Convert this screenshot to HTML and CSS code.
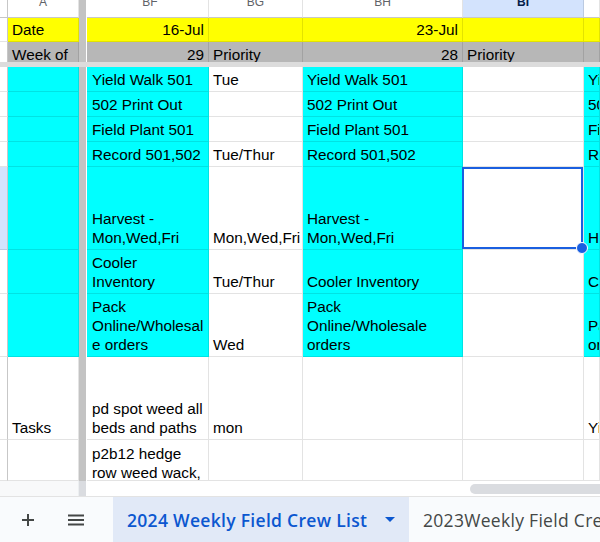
FILE: index.html
```html
<!DOCTYPE html>
<html>
<head>
<meta charset="utf-8">
<link rel="stylesheet" href="styles.css">
</head>
<body>
<div class="sheet">
  <div class="row hdr">
    <div class="c rh"></div>
    <div class="c"><span>A</span></div>
    <div class="fz"></div>
    <div class="c"><span>BF</span></div>
    <div class="c"><span>BG</span></div>
    <div class="c"><span>BH</span></div>
    <div class="c sel-col"><span>BI</span></div>
    <div class="c"></div>
  </div>
  <div class="row date">
    <div class="c rh"></div>
    <div class="c ye">Date</div>
    <div class="fz"></div>
    <div class="c ye r">16-Jul</div>
    <div class="c ye"></div>
    <div class="c ye r">23-Jul</div>
    <div class="c ye"></div>
    <div class="c ye"></div>
  </div>
  <div class="row week">
    <div class="c rh"></div>
    <div class="c gr">Week of</div>
    <div class="fz"></div>
    <div class="c gr r">29</div>
    <div class="c gr">Priority</div>
    <div class="c gr r">28</div>
    <div class="c gr">Priority</div>
    <div class="c gr"></div>
  </div>
  <div class="hfz"></div>
  <div class="row">
    <div class="c rh"></div>
    <div class="c cy"></div>
    <div class="fz"></div>
    <div class="c cy">Yield Walk 501</div>
    <div class="c">Tue</div>
    <div class="c cy">Yield Walk 501</div>
    <div class="c"></div>
    <div class="c cy">Yield Walk 501</div>
  </div>
  <div class="row">
    <div class="c rh"></div>
    <div class="c cy"></div>
    <div class="fz"></div>
    <div class="c cy">502 Print Out</div>
    <div class="c"></div>
    <div class="c cy">502 Print Out</div>
    <div class="c"></div>
    <div class="c cy">502 Print Out</div>
  </div>
  <div class="row">
    <div class="c rh"></div>
    <div class="c cy"></div>
    <div class="fz"></div>
    <div class="c cy">Field Plant 501</div>
    <div class="c"></div>
    <div class="c cy">Field Plant 501</div>
    <div class="c"></div>
    <div class="c cy">Field Plant 501</div>
  </div>
  <div class="row">
    <div class="c rh"></div>
    <div class="c cy"></div>
    <div class="fz"></div>
    <div class="c cy">Record 501,502</div>
    <div class="c">Tue/Thur</div>
    <div class="c cy">Record 501,502</div>
    <div class="c"></div>
    <div class="c cy">Record 501,502</div>
  </div>
  <div class="row harvest">
    <div class="c rh sel-row"></div>
    <div class="c cy"></div>
    <div class="fz"></div>
    <div class="c cy"><span>Harvest -<br>Mon,Wed,Fri</span></div>
    <div class="c">Mon,Wed,Fri</div>
    <div class="c cy"><span>Harvest -<br>Mon,Wed,Fri</span></div>
    <div class="c selected"><div class="selbox"><div class="handle"></div></div></div>
    <div class="c cy">Harvest - Mon,Wed,Fri</div>
  </div>
  <div class="row cooler">
    <div class="c rh"></div>
    <div class="c cy"></div>
    <div class="fz"></div>
    <div class="c cy"><span>Cooler<br>Inventory</span></div>
    <div class="c">Tue/Thur</div>
    <div class="c cy">Cooler Inventory</div>
    <div class="c"></div>
    <div class="c cy">Cooler Inventory</div>
  </div>
  <div class="row pack">
    <div class="c rh"></div>
    <div class="c cy"></div>
    <div class="fz"></div>
    <div class="c cy"><span>Pack<br>Online/Wholesal<br>e orders</span></div>
    <div class="c">Wed</div>
    <div class="c cy"><span>Pack<br>Online/Wholesale<br>orders</span></div>
    <div class="c"></div>
    <div class="c cy"><span>Pack Online/Wholesale<br>orders</span></div>
  </div>
  <div class="row tasks">
    <div class="c rh"></div>
    <div class="c">Tasks</div>
    <div class="fz"></div>
    <div class="c"><span>pd spot weed all<br>beds and paths</span></div>
    <div class="c">mon</div>
    <div class="c"></div>
    <div class="c"></div>
    <div class="c">Yield Walk</div>
  </div>
  <div class="row last">
    <div class="c rh"></div>
    <div class="c"></div>
    <div class="fz"></div>
    <div class="c top"><span>p2b12 hedge<br>row weed wack,<br>spot weed</span></div>
    <div class="c"></div>
    <div class="c"></div>
    <div class="c"></div>
    <div class="c"></div>
  </div>
  <div class="scroll">
    <div class="sc-left"></div>
    <div class="sc-fz"></div>
    <div class="sc-track"><div class="thumb"></div></div>
  </div>
</div>
<div class="tabbar">
  <div class="tbtn plus">
    <svg width="14" height="14" viewBox="0 0 14 14"><path d="M7 1v12M1 7h12" stroke="#444746" stroke-width="2" fill="none"/></svg>
  </div>
  <div class="tbtn menu">
    <svg width="18" height="12" viewBox="0 0 18 12"><path d="M1 1.5h16M1 6h16M1 10.5h16" stroke="#444746" stroke-width="2" fill="none"/></svg>
  </div>
  <div class="tab active">
    <span class="tname">2024 Weekly Field Crew List</span>
    <svg class="caret" width="10" height="5" viewBox="0 0 10 5"><path d="M0 0h10L5 5z" fill="#0b57d0"/></svg>
  </div>
  <div class="tab">
    <span class="tname">2023Weekly Field Crew List</span>
  </div>
</div>
</body>
</html>
```

FILE: styles.css
```css
* { box-sizing: border-box; margin: 0; padding: 0; }
html, body { width: 600px; height: 542px; overflow: hidden; background: #fff; }
body {
  font-family: "Liberation Sans", Arial, sans-serif;
  font-size: 15.3px;
  color: #000;
}
.sheet { display: flex; flex-direction: column; width: 600px; }
.row {
  display: grid;
  grid-template-columns: 8px 71px 8px 122px 94px 160px 121px 16px;
  height: 25px;
  flex: none;
}
.c {
  border-right: 1px solid rgba(0, 0, 0, 0.11);
  border-bottom: 1px solid rgba(0, 0, 0, 0.11);
  overflow: hidden;
  display: flex;
  align-items: flex-end;
  padding: 0 4px 2px;
  white-space: nowrap;
  line-height: 19px;
  min-width: 0;
}
.row > .c:nth-child(4) { padding-left: 5px; }
.c.r { justify-content: flex-end; }
.c.top { align-items: flex-start; padding-top: 4px; }
.rh { padding: 0; border-right-color: #c7c7c7; }
.fz { background: #c3c3c3; border-right: 1px solid #fff; }
.ye { background: #ffff00; }
.gr { background: #b7b7b7; }
.cy { background: #00ffff; }

.hdr { height: 18px; }
.hdr .c {
  justify-content: center;
  align-items: flex-start;
  font-size: 12px;
  line-height: 12px;
  color: #5f6368;
  padding: 0;
  border-bottom-color: #c7c7c7;
}
.hdr .c span { margin-top: -4px; }
.hdr .c.rh { border-right-color: #c7c7c7; }
.hdr .sel-col { background: #d3e3fd; color: #041e49; font-weight: 700; }

.date { height: 24px; }
.week { height: 20px; }
.week .c { border-bottom: none; padding-bottom: 0; line-height: 15px; }
.hfz { height: 5px; background: #dcdcdc; flex: none; }

.harvest { height: 83px; }
.cooler { height: 44px; }
.pack { height: 63px; }
.tasks { height: 83px; }
.last { height: 41px; }

.sel-row { background: #d3e3fd; }
.c.selected { overflow: visible; position: relative; }
.selbox {
  position: absolute;
  left: -1px; top: 0; right: 0; bottom: 0;
  border: 2px solid #1a5fe0;
  z-index: 2;
}
.handle {
  position: absolute;
  right: -7px; bottom: -7px;
  width: 12px; height: 12px;
  border-radius: 50%;
  background: #1a5fe0;
  border: 1px solid #fff;
}

.scroll {
  display: grid;
  grid-template-columns: 79px 7px 1fr;
  height: 15px;
  flex: none;
}
.sc-left { background: #f8f9fa; border-right: 1px solid #eceff1; }
.sc-fz { background: #dadce0; }
.sc-track { display: flex; align-items: center; padding-left: 384px; }
.thumb { flex: 1; height: 10px; background: #dadce0; border-radius: 5px 0 0 5px; }

.tabbar {
  display: flex;
  height: 46px;
  border-top: 1px solid #e3e3e3;
  background: #f9fbfd;
  align-items: stretch;
  font-family: "Open Sans", "Roboto", sans-serif;
  font-size: 17.5px;
  letter-spacing: 0.3px;
  white-space: nowrap;
  overflow: hidden;
}
.tbtn { display: flex; align-items: center; justify-content: center; flex: none; }
.plus { width: 55px; }
.menu { width: 41px; margin-right: 17px; }
.tab {
  display: flex;
  align-items: center;
  padding: 0 14px;
  flex: none;
  color: #444746;
  font-weight: 500;
}
.tab.active {
  width: 296px;
  background: #e1e9f7;
  color: #0b57d0;
  font-weight: 600;
}
.caret { margin-left: auto; }
```
